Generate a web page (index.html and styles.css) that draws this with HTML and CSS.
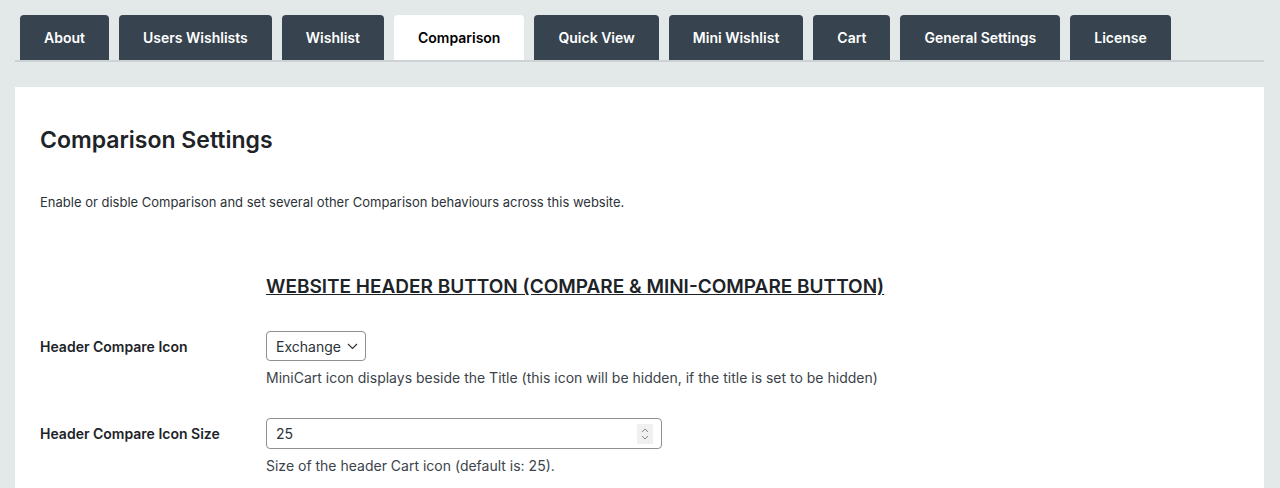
FILE: index.html
```html
<!DOCTYPE html>
<html lang="en">
<head>
  <meta charset="UTF-8" />
  <title>Comparison Settings</title>
  <link rel="stylesheet" href="styles.css">
</head>
<body>
<div class="wrap">
  <nav class="tabs">
    <a class="tab" href="#">About</a>
    <a class="tab" href="#">Users Wishlists</a>
    <a class="tab" href="#">Wishlist</a>
    <a class="tab active" href="#">Comparison</a>
    <a class="tab" href="#">Quick View</a>
    <a class="tab" href="#">Mini Wishlist</a>
    <a class="tab" href="#">Cart</a>
    <a class="tab" href="#">General Settings</a>
    <a class="tab" href="#">License</a>
  </nav>

  <div class="panel">
    <h2>Comparison Settings</h2>
    <p class="intro">Enable or disble Comparison and set several other Comparison behaviours across this website.</p>

    <h3 class="section">WEBSITE HEADER BUTTON (COMPARE &amp; MINI-COMPARE BUTTON)</h3>

    <div class="row">
      <label class="label">Header Compare Icon</label>
      <div class="field">
        <div class="select">Exchange
          <svg width="11" height="7" viewBox="0 0 11 7"><path d="M1 1l4.5 4.5L10 1" fill="none" stroke="#333" stroke-width="1.2"/></svg>
        </div>
        <p class="help">MiniCart icon displays beside the Title (this icon will be hidden, if the title is set to be hidden)</p>
      </div>
    </div>

    <div class="row">
      <label class="label">Header Compare Icon Size</label>
      <div class="field">
        <div class="number">25
          <span class="spin">
            <svg width="8" height="14" viewBox="0 0 8 14"><path d="M1 5l3-3 3 3M1 9l3 3 3-3" fill="none" stroke="#888" stroke-width="1"/></svg>
          </span>
        </div>
        <p class="help">Size of the header Cart icon (default is: 25).</p>
      </div>
    </div>
  </div>
</div>
</body>
</html>
```

FILE: styles.css
```css
body {
  margin: 0;
  background: #e3e8e8;
  font-family: Inter, "Noto Sans", sans-serif;
  color: #1d2327;
}
.wrap {
  padding: 15px 16px 0 15px;
}
.tabs {
  display: flex;
  gap: 10px;
  padding-left: 5px;
  border-bottom: 2px solid #cdd2d4;
  height: 45px;
}
.tab {
  display: flex;
  align-items: center;
  padding: 0 24px;
  background: #37444f;
  color: #fff;
  font-size: 14px;
  font-weight: 600;
  text-decoration: none;
  border-radius: 4px 4px 0 0;
}
.tab.active {
  background: #fff;
  color: #000;
}
.panel {
  margin-top: 25px;
  background: #fff;
  padding: 39px 25px 30px;
  height: 400px;
}
h2 {
  margin: 0;
  font-size: 23px;
  font-weight: 600;
}
.intro {
  margin: 40px 0 0;
  font-size: 13px;
  color: #2c3338;
}
.section {
  margin: 65px 0 0 226px;
  font-size: 19px;
  font-weight: 600;
  text-decoration: underline;
}
.row {
  display: flex;
  margin-top: 33px;
}
.row + .row {
  margin-top: 32px;
}
.label {
  width: 226px;
  font-size: 14px;
  font-weight: 600;
  padding-top: 7px;
}
.select {
  display: inline-flex;
  align-items: center;
  gap: 6px;
  height: 28px;
  padding: 0 7px 0 9px;
  border: 1px solid #8c8f94;
  border-radius: 4px;
  font-size: 14px;
  color: #2c3338;
}
.number {
  display: flex;
  align-items: center;
  justify-content: space-between;
  width: 377px;
  height: 29px;
  padding: 0 8px 0 9px;
  border: 1px solid #8c8f94;
  border-radius: 4px;
  font-size: 14px;
  color: #2c3338;
}
.spin {
  display: flex;
  align-items: center;
  justify-content: center;
  width: 16px;
  height: 20px;
  background: #f0f0f1;
}
.help {
  margin: 8px 0 0;
  font-size: 14px;
  color: #3c434a;
}
```
